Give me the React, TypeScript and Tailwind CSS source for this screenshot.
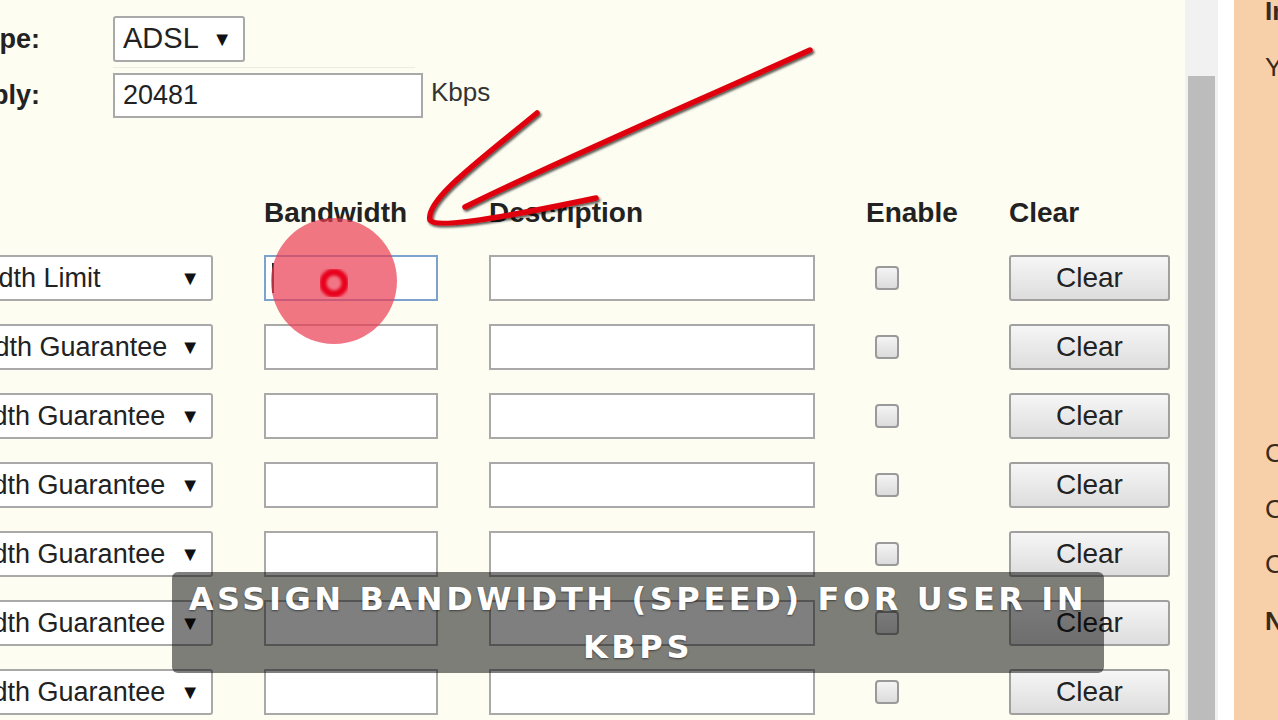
import React from 'react'

// Router QoS page — bandwidth rules table, cropped as in a screen recording,
// with the red pointer annotation and the caption bar laid over it.

const FONT = { fontFamily: '"Liberation Sans", Arial, sans-serif' }

const rows = [
  { label: 'Bandwidth Limit', pad: 28, focused: true },
  { label: 'Bandwidth Guarantee', pad: 24 },
  { label: 'Bandwidth Guarantee', pad: 22 },
  { label: 'Bandwidth Guarantee', pad: 22 },
  { label: 'Bandwidth Guarantee', pad: 22 },
  { label: 'Bandwidth Guarantee', pad: 22 },
  { label: 'Bandwidth Guarantee', pad: 22 },
]

function Row({ label, pad, focused }: { label: string; pad: number; focused?: boolean }) {
  return (
    <div className="flex items-center h-[46px]">
      <div className="-ml-[120px] w-[333px] h-[46px] bg-white border-2 border-[#a9a9a9] rounded-[3px] flex items-center overflow-hidden shrink-0">
        <span className="whitespace-nowrap text-[27px] text-[#222]" style={{ paddingLeft: pad }}>{label}</span>
        <span className="ml-auto mr-[11px] text-[20px] text-[#111]">▼</span>
      </div>
      <div
        className={
          'ml-[51px] w-[174px] h-[46px] bg-white border-2 shrink-0 flex items-center ' +
          (focused ? 'border-[#7da2ce]' : 'border-[#a9a9a9]')
        }
      >
        {focused && <div className="ml-[6px] w-[2px] h-[30px] bg-[#222]" />}
      </div>
      <div className="ml-[51px] w-[326px] h-[46px] bg-white border-2 border-[#a9a9a9] shrink-0" />
      <div className="ml-[60px] w-[24px] h-[24px] rounded-[4px] border-2 border-[#9a9a9a] bg-gradient-to-b from-[#f4f4f4] to-[#dcdcdc] shrink-0" />
      <button className="ml-[110px] w-[161px] h-[46px] rounded-[3px] border-2 border-[#a0a0a0] bg-gradient-to-b from-[#f6f6f6] to-[#dddddd] text-[28px] text-[#222] shrink-0">
        Clear
      </button>
    </div>
  )
}

export default function App() {
  return (
    <div className="w-[1278px] h-[720px] overflow-hidden relative flex bg-[#fdfdf1]" style={FONT}>
      <div className="relative w-[1185px] h-full overflow-hidden">
        <div className="pt-[16px]">
          <div className="flex items-center h-[46px]">
            <div className="-ml-[260px] w-[300px] text-right font-bold text-[27px] text-[#222] whitespace-nowrap shrink-0">Connection Type:</div>
            <div className="ml-[73px] w-[132px] h-[46px] bg-white border-2 border-[#a9a9a9] rounded-[3px] flex items-center pl-[8px] shrink-0">
              <span className="text-[29px] text-[#222]">ADSL</span>
              <span className="ml-auto mr-[11px] text-[20px] text-[#111]">▼</span>
            </div>
          </div>
          <div className="ml-[113px] w-[302px] h-[1px] bg-[#ecece0] mt-[5px]" />
          <div className="flex items-center h-[45px] mt-[5px]">
            <div className="-ml-[260px] w-[300px] text-right font-bold text-[27px] text-[#222] whitespace-nowrap shrink-0">Upstream Supply:</div>
            <div className="ml-[73px] w-[310px] h-[45px] bg-white border-2 border-[#a9a9a9] flex items-center pl-[8px] shrink-0">
              <span className="text-[27px] text-[#222]">20481</span>
            </div>
            <span className="ml-[8px] -mt-[6px] text-[26px] text-[#333]">Kbps</span>
          </div>

          <div className="flex items-center mt-[78px] h-[34px] pl-[264px] font-bold text-[28px] text-[#222]">
            <div className="w-[225px]">Bandwidth</div>
            <div className="w-[377px]">Description</div>
            <div className="w-[143px]">Enable</div>
            <div>Clear</div>
          </div>

          <div className="mt-[25px] flex flex-col gap-[23px]">
            {rows.map((r, i) => (
              <Row key={i} {...r} />
            ))}
          </div>
        </div>

        <svg className="absolute inset-0 pointer-events-none" width="1185" height="720">
          <defs>
            <filter id="sh" x="-10%" y="-10%" width="120%" height="120%">
              <feDropShadow dx="1.5" dy="2" stdDeviation="1.2" floodColor="#000" floodOpacity="0.65" />
            </filter>
            <filter id="bl">
              <feGaussianBlur stdDeviation="1.5" />
            </filter>
          </defs>
          <circle cx="334" cy="281" r="63" fill="#ea3c52" opacity="0.7" />
          <circle cx="334" cy="283" r="11" fill="none" stroke="#e8001a" strokeWidth="7" filter="url(#bl)" />
          <g filter="url(#sh)" stroke="#e0000f" strokeWidth="5.5" fill="none" strokeLinecap="round">
            <path d="M810 50 C 700 100, 560 160, 465 207" />
            <path d="M537 113 C 480 160, 425 200, 430 220 C 436 230, 520 214, 596 198" />
          </g>
        </svg>

        <div className="absolute left-[172px] top-[572px] w-[932px] h-[101px] rounded-[6px] bg-[rgba(0,0,0,0.5)] flex flex-col items-center justify-center">
          <div
            className="text-white font-bold text-[32px] leading-[48px] tracking-[3.6px] text-center whitespace-nowrap"
            style={{ fontFamily: '"DejaVu Sans", sans-serif', textShadow: '0 1px 2px rgba(0,0,0,0.5)' }}
          >
            ASSIGN BANDWIDTH (SPEED) FOR USER IN
          </div>
          <div
            className="text-white font-bold text-[32px] leading-[48px] tracking-[3.6px] text-center"
            style={{ fontFamily: '"DejaVu Sans", sans-serif', textShadow: '0 1px 2px rgba(0,0,0,0.5)' }}
          >
            KBPS
          </div>
        </div>
      </div>

      <div className="w-[33px] h-full bg-[#f1f1f1] flex flex-col">
        <div className="h-[76px]" />
        <div className="mx-[3px] flex-1 bg-[#bcbcbc]" />
      </div>
      <div className="w-[16px] h-full bg-white" />
      <div className="w-[44px] h-full bg-[#f7cfa9] overflow-hidden pl-[31px] text-[26px] text-[#3a2a1a] whitespace-nowrap">
        <div className="font-bold -mt-[8px] h-[32px]">Internet</div>
        <div className="mt-[24px]">Your</div>
        <div className="mt-[347px]">Connection</div>
        <div className="mt-[17px]">Connection</div>
        <div className="mt-[16px]">Connection</div>
        <div className="mt-[18px] font-bold">Note</div>
      </div>
    </div>
  )
}
